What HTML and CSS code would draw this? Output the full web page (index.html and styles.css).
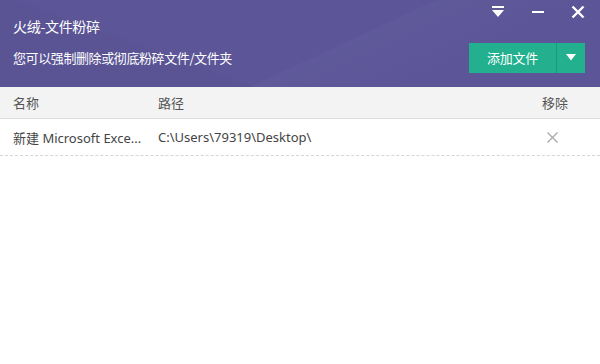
FILE: index.html
```html
<!DOCTYPE html>
<html lang="zh">
<head>
<meta charset="utf-8">
<link rel="stylesheet" href="styles.css">
</head>
<body>
<div class="app">
  <header class="top">
    <div class="top-row">
      <div class="title">火绒-文件粉碎</div>
      <div class="win-btns">
        <span class="wbtn"><svg width="14" height="12" viewBox="0 0 14 12"><rect x="1" y="0" width="12" height="2" fill="#fff"/><path d="M1 4 H13 L7 11 Z" fill="#fff"/></svg></span>
        <span class="wbtn"><svg width="14" height="12" viewBox="0 0 14 12"><rect x="1" y="5" width="12" height="2" fill="#fff"/></svg></span>
        <span class="wbtn"><svg width="14" height="14" viewBox="0 0 14 14"><path d="M1.5 1.5 L12.5 12.5 M12.5 1.5 L1.5 12.5" stroke="#fff" stroke-width="2.4"/></svg></span>
      </div>
    </div>
    <div class="sub-row">
      <div class="subtitle">您可以强制删除或彻底粉碎文件/文件夹</div>
      <div class="add-group">
        <button class="add-btn">添加文件</button>
        <button class="drop-btn"><svg width="10" height="7" viewBox="0 0 10 7"><path d="M0 0 H10 L5 6.5 Z" fill="#fff"/></svg></button>
      </div>
    </div>
  </header>
  <div class="thead">
    <div class="c-name">名称</div>
    <div class="c-path">路径</div>
    <div class="c-rm">移除</div>
  </div>
  <div class="trow">
    <div class="c-name">新建 Microsoft Exce...</div>
    <div class="c-path">C:\Users\79319\Desktop\</div>
    <div class="c-rm"><svg width="11" height="11" viewBox="0 0 11 11"><path d="M0.5 0.5 L10.5 10.5 M10.5 0.5 L0.5 10.5" stroke="#a9a9a9" stroke-width="1.3"/></svg></div>
  </div>
</div>
</body>
</html>
```
FILE: styles.css
```css
* { box-sizing: border-box; }
html, body { margin: 0; padding: 0; background: #fff; }
body {
  font-family: "Noto Sans CJK SC", "Noto Sans", sans-serif;
  width: 600px;
  height: 364px;
  overflow: hidden;
}
.app { width: 600px; height: 364px; background: #fff; }
.top {
  height: 87px;
  background:
    linear-gradient(155deg, rgba(255,255,255,0) 55%, rgba(255,255,255,0.025) 56%, rgba(255,255,255,0) 75%),
    linear-gradient(20deg, rgba(0,0,0,0.025) 30%, rgba(255,255,255,0) 31%),
    #5c5698;
  color: #fff;
  padding: 0 15px 0 13px;
}
.top-row {
  height: 36px;
  display: flex;
  justify-content: space-between;
  align-items: flex-start;
}
.title {
  font-size: 14px;
  line-height: 20px;
  margin-top: 16px;
  letter-spacing: -0.3px;
}
.win-btns {
  display: flex;
  gap: 26px;
  margin-top: 5px;
}
.wbtn { display: flex; width: 14px; height: 14px; align-items: center; justify-content: center; }
.sub-row {
  display: flex;
  justify-content: space-between;
  align-items: center;
  height: 36px;
}
.subtitle {
  font-size: 13px;
  line-height: 18px;
  margin-top: 7px;
  letter-spacing: -0.4px;
}
.add-group {
  display: flex;
  height: 30px;
  margin-top: 7px;
}
.add-btn, .drop-btn {
  border: 0;
  margin: 0;
  background: #22b08e;
  color: #fff;
  font-family: inherit;
  font-size: 13px;
  height: 30px;
  padding: 0;
}
.add-btn { width: 87px; letter-spacing: -0.3px; }
.drop-btn {
  width: 29px;
  border-left: 1px solid #1b9b7b;
  display: flex;
  align-items: center;
  justify-content: center;
}
.thead, .trow {
  display: grid;
  grid-template-columns: 145px 1fr 58px;
  padding-left: 13px;
  font-size: 13px;
}
.thead {
  height: 32px;
  background: #f3f3f3;
  border-bottom: 1px solid #dedede;
  color: #555;
  align-items: center;
}
.trow {
  height: 37px;
  border-bottom: 1px dashed #d6d6d6;
  align-items: center;
  color: #444;
  font-family: "Noto Sans", "Noto Sans CJK SC", sans-serif;
  font-size: 13px;
}
.c-rm { display: flex; }
.trow .c-rm { padding-left: 5px; }
.c-name { white-space: nowrap; }
```
